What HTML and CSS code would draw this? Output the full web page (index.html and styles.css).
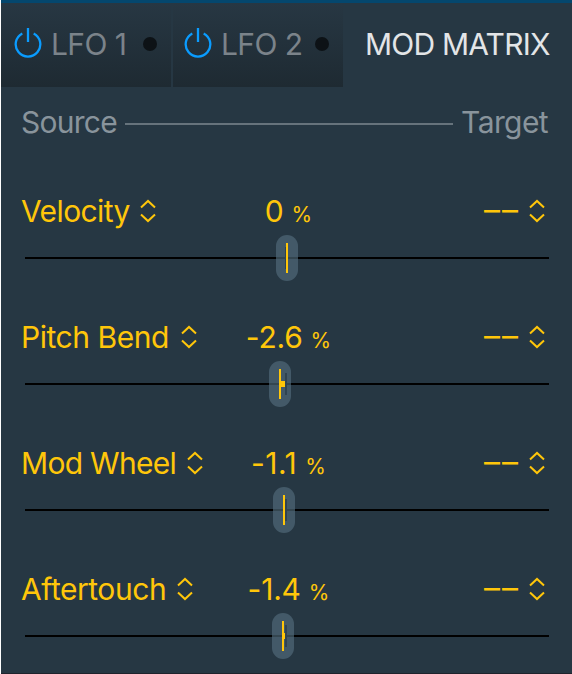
FILE: index.html
```
<!DOCTYPE html>
<html lang="en">
<head>
<meta charset="utf-8">
<title>Mod Matrix</title>
<link rel="stylesheet" href="styles.css">
</head>
<body>
<svg width="0" height="0" class="defs">
  <symbol id="power" viewBox="0 0 28 32"><path d="M8.3 6.4A12.3 12.3 0 1 0 19.7 6.4M14 1v14"/></symbol>
  <symbol id="updown" viewBox="0 0 16 24"><path d="M1 8.4L8 1.9l7 6.5M1 15.6l7 6.5 7-6.5"/></symbol>
</svg>
<main class="panel">
  <nav class="tabs">
    <div class="tab"><svg class="power"><use href="#power"/></svg><span class="label">LFO 1</span><i class="led"></i></div>
    <div class="tab second"><svg class="power"><use href="#power"/></svg><span class="label">LFO 2</span><i class="led"></i></div>
    <div class="tab active"><span class="label">MOD MATRIX</span></div>
  </nav>
  <header class="head"><span class="source">Source</span><hr><span class="target">Target</span></header>

  <section class="row">
    <div class="line"><div class="pick velocity"><span>Velocity</span><svg><use href="#updown"/></svg></div><div class="value"><b>0</b><small>%</small></div><div class="pick end"><span class="none">––</span><svg><use href="#updown"/></svg></div></div>
    <div class="slider"><svg class="thumb t0" viewBox="0 0 22 46"><rect class="body" width="22" height="46" rx="11"/><path class="groove" d="M0 22h22v2H0z"/><path class="zero" d="M9 12h2v22H9z"/><path class="mark" d="M10 8h2v30h-2z"/></svg></div>
  </section>
  <section class="row">
    <div class="line"><div class="pick pitch"><span>Pitch Bend</span><svg><use href="#updown"/></svg></div><div class="value"><b>-2.6</b><small>%</small></div><div class="pick end"><span class="none">––</span><svg><use href="#updown"/></svg></div></div>
    <div class="slider"><svg class="thumb t1" viewBox="0 0 22 46"><rect class="body" width="22" height="46" rx="11"/><path class="groove" d="M0 22h22v2H0z"/><path class="zero" d="M16 12h2v22h-2z"/><path class="mark" d="M10 8h2v12h4v6h-4v12h-2z"/></svg></div>
  </section>
  <section class="row">
    <div class="line"><div class="pick wheel"><span>Mod Wheel</span><svg><use href="#updown"/></svg></div><div class="value"><b class="wide">-1.1</b><small>%</small></div><div class="pick end"><span class="none">––</span><svg><use href="#updown"/></svg></div></div>
    <div class="slider"><svg class="thumb t2" viewBox="0 0 22 46"><rect class="body" width="22" height="46" rx="11"/><path class="groove" d="M0 22h22v2H0z"/><path class="zero" d="M12 12h2v22h-2z"/><path class="mark" d="M10 8h2v30h-2z"/></svg></div>
  </section>
  <section class="row">
    <div class="line"><div class="pick after"><span>Aftertouch</span><svg><use href="#updown"/></svg></div><div class="value"><b>-1.4</b><small>%</small></div><div class="pick end"><span class="none">––</span><svg><use href="#updown"/></svg></div></div>
    <div class="slider"><svg class="thumb t3" viewBox="0 0 22 46"><rect class="body" width="22" height="46" rx="11"/><path class="groove" d="M0 22h22v2H0z"/><path class="zero" d="M13 12h2v22h-2z"/><path class="mark" d="M10 8h2v12h1v6h-1v12h-2z"/></svg></div>
  </section>
</main>
</body>
</html>
```
FILE: styles.css
```
* { box-sizing: border-box; }
body { margin: 0; background: #fff; font-family: Inter, "Liberation Sans", sans-serif; font-size: 30px; line-height: 36px; letter-spacing: -0.6px; }
.defs { display: block; }
svg { flex: none; fill: none; }
.panel { margin-left: 1px; height: 674px; background: #263743; border-top: 3px solid #04476e; border-bottom: 1px solid #1f232c; overflow: hidden; }
.tabs { display: flex; height: 84px; gap: 2px; }
.tab { width: 170px; display: flex; align-items: center; padding: 0 14px 2px 13px; background: linear-gradient(#273743, #1e2a32); color: #7b838a; white-space: nowrap; }
.tab.second { padding-left: 11px; }
.tab.active { flex: 1; background: none; color: #e3e5e7; padding-left: 20px; letter-spacing: -0.8px; }
.power { width: 28px; height: 32px; stroke: #0a9cff; stroke-width: 2.3; margin-top: -3px; margin-right: 9px; }
.led { width: 14px; height: 14px; border-radius: 50%; background: #0d1216; margin-left: auto; }
.head { display: flex; align-items: center; height: 36px; margin: 17px 24px 1px 20px; color: #89949c; }
.source { letter-spacing: -0.75px; }
hr { flex: 1; height: 2px; border: 0; margin: 4px 8px 0; background: #66737c; }
.row { height: 126px; padding-top: 52px; }
.line { display: grid; grid-template-columns: 200px 1fr 200px; height: 36px; padding: 0 27px 0 20px; color: #ffc60a; white-space: nowrap; }
.pick { display: flex; align-items: center; gap: 11px; height: 36px; margin-top: 0; }
.pitch { letter-spacing: -0.45px; gap: 12px; }
.wheel { letter-spacing: -0.7px; }
.after { letter-spacing: -0.45px; }
.velocity { gap: 10px; }
.pick.end { justify-content: flex-end; gap: 9px; }
.none { font-size: 32px; letter-spacing: 2px; margin-top: -2px; }
.pick svg { width: 16px; height: 24px; stroke: #ffc60a; stroke-width: 2; }
.value { display: flex; justify-content: center; align-items: baseline; gap: 8px; padding-left: 11px; }
b { font-weight: 400; letter-spacing: -0.2px; }
.wide { letter-spacing: 0.5px; }
small { font-size: 21px; letter-spacing: 0; }
.slider { height: 46px; margin: 6px 23px 0 24px; background: linear-gradient(#000, #000) 0 22px / 100% 2px no-repeat; }
.thumb { display: block; width: 22px; height: 46px; }
.t0 { margin-left: 251px; }
.t1 { margin-left: 244px; }
.t2 { margin-left: 248px; }
.t3 { margin-left: 247px; }
.body { fill: #435968; }
.groove { fill: #344650; }
.zero { fill: #304351; }
.mark { fill: #ffc60a; }
```
